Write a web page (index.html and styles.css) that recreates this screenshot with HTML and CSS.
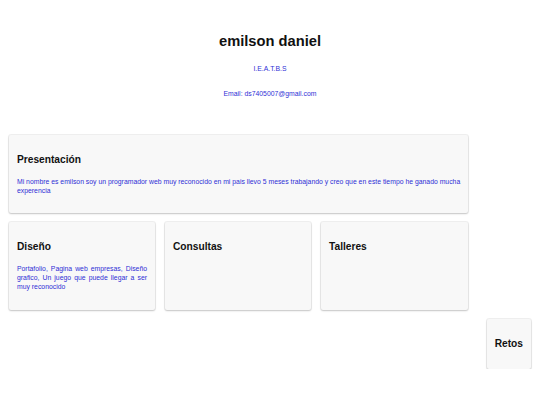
FILE: index.html
```html
<!DOCTYPE html>
<html lang="es">
<head>
<meta charset="utf-8">
<title>emilson daniel</title>
<link rel="stylesheet" href="styles.css">
</head>
<body>
<header class="header">
  <h1 class="name">emilson daniel</h1>
  <p class="sub">I.E.A.T.B.S</p>
  <p class="sub">Email: ds7405007@gmail.com</p>
</header>
<main class="main">
  <section class="card card-wide">
    <h3 class="card-title">Presentación</h3>
    <p class="card-text">Mi nombre es emilson soy un programador web muy reconocido en mi pais llevo 5 meses trabajando y creo que en este tiempo he ganado mucha experencia</p>
  </section>
  <div class="row">
    <section class="card">
      <h3 class="card-title">Diseño</h3>
      <p class="card-text justify">Portafolio, Pagina web empresas, Diseño grafico, Un juego que puede llegar a ser muy reconocido</p>
    </section>
    <section class="card">
      <h3 class="card-title">Consultas</h3>
    </section>
    <section class="card">
      <h3 class="card-title">Talleres</h3>
    </section>
  </div>
  <div class="row-end">
    <section class="card card-small">
      <h3 class="card-title">Retos</h3>
    </section>
  </div>
</main>
</body>
</html>
```

FILE: styles.css
```css
html, body {
  margin: 0;
  padding: 0;
  background: #ffffff;
}
body {
  font-family: "Liberation Sans", Arial, sans-serif;
  color: #111;
}
.header {
  text-align: center;
  padding-top: 32px;
  height: 103px;
  box-sizing: border-box;
}
.name {
  font-size: 14.7px;
  font-weight: bold;
  margin: 0 0 15px 0;
  line-height: 18px;
  color: #111;
}
.sub {
  font-size: 6.85px;
  color: #2f2fd6;
  margin: 0 0 17px 0;
  line-height: 8px;
}
.main {
  padding: 32px 9px 0 9px;
}
.card {
  background: #f8f8f8;
  border-radius: 2px;
  box-shadow: 0 0 0 1px rgba(0,0,0,0.06), 0 1px 2px rgba(0,0,0,0.18);
  padding: 0 8px;
  box-sizing: border-box;
}
.card-wide {
  width: 459px;
  height: 78px;
  padding-right: 3px;
}
.card-title {
  font-size: 10.2px;
  font-weight: bold;
  margin: 0;
  padding: 19px 0 11px 0;
  line-height: 12px;
  color: #111;
}
.card-text {
  font-size: 6.85px;
  line-height: 9px;
  color: #2f2fd6;
  margin: 0;
}
.justify {
  text-align: justify;
}
.row {
  display: grid;
  grid-template-columns: 146px 146px 147px;
  column-gap: 10px;
  margin-top: 9px;
  width: 459px;
}
.row .card {
  height: 88px;
}
.row-end {
  display: flex;
  justify-content: flex-end;
  margin-top: 9px;
}
.card-small {
  height: 50px;
  display: flex;
  align-items: center;
}
.card-small .card-title {
  padding: 0;
}
```
